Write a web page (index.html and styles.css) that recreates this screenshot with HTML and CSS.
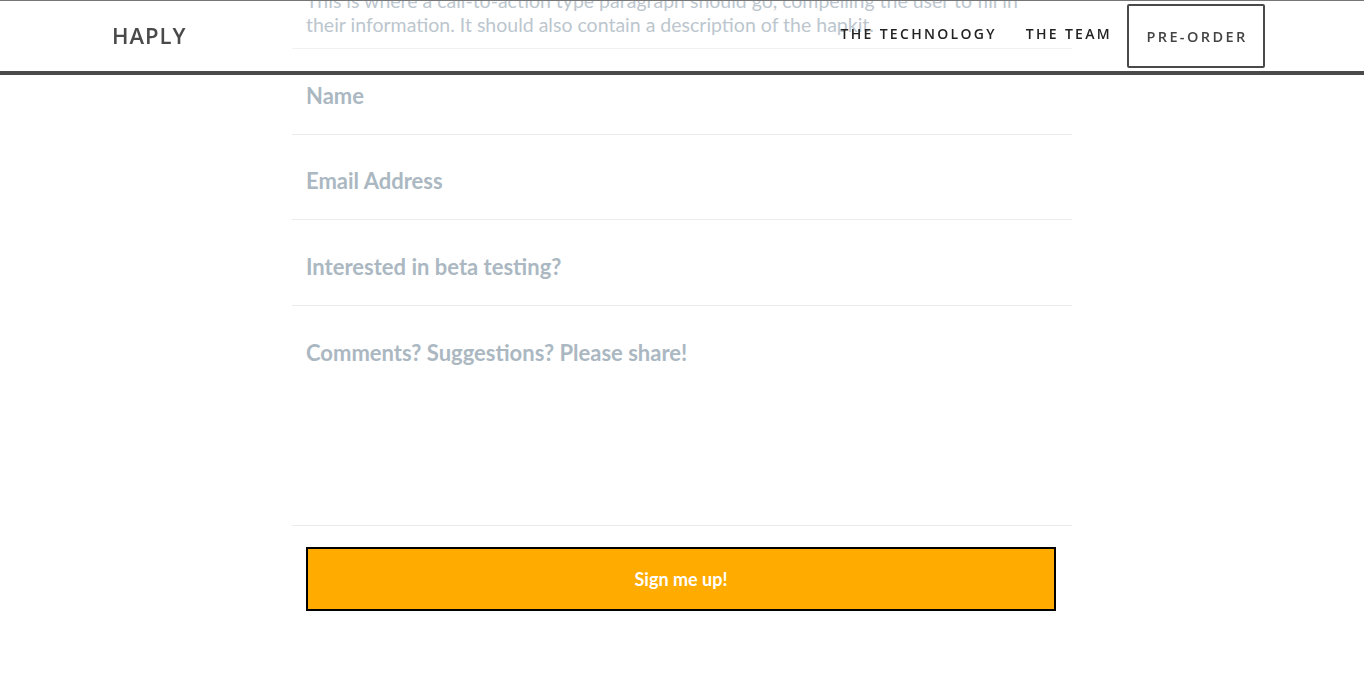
FILE: index.html
```html
<!DOCTYPE html>
<html lang="en">
<head>
<meta charset="utf-8">
<title>Haply - Pre-order</title>
<link rel="stylesheet" href="styles.css">
</head>
<body>
<header class="site-header">
  <a class="logo" href="#">HAPLY</a>
  <nav class="nav">
    <a class="nav-link" href="#">THE TECHNOLOGY</a>
    <a class="nav-link" href="#">THE TEAM</a>
    <a class="nav-button" href="#">PRE-ORDER</a>
  </nav>
</header>
<main class="signup">
  <p class="intro">This is where a call-to-action type paragraph should go, compelling the user to fill in their information. It should also contain a description of the hapkit.</p>
  <form class="form">
    <input class="field" type="text" placeholder="Name">
    <input class="field" type="email" placeholder="Email Address">
    <input class="field" type="text" placeholder="Interested in beta testing?">
    <textarea class="field field-area" placeholder="Comments? Suggestions? Please share!"></textarea>
    <button class="submit" type="button">Sign me up!</button>
  </form>
</main>
</body>
</html>
```
FILE: styles.css
```css
html, body {
  margin: 0;
  padding: 0;
  background: #ffffff;
  overflow: hidden;
}

body {
  font-family: Lato, "Open Sans", sans-serif;
}

.site-header {
  position: fixed;
  top: 0;
  left: 0;
  right: 0;
  height: 70px;
  border-top: 1px solid #767676;
  border-bottom: 4px solid #4a4a4a;
  display: flex;
  align-items: center;
  justify-content: space-between;
  padding: 0 99px 0 112px;
  z-index: 10;
}

.logo {
  font-family: "Open Sans", sans-serif;
  font-size: 22px;
  font-weight: 600;
  letter-spacing: 1px;
  color: #4a4a4a;
  text-decoration: none;
  margin-top: -3px;
}

.nav {
  display: flex;
  align-items: center;
}

.nav-link {
  font-family: "Open Sans", sans-serif;
  font-size: 14px;
  font-weight: 600;
  letter-spacing: 2.3px;
  color: #222222;
  text-decoration: none;
  margin-right: 29px;
  margin-bottom: 6px;
}

.nav-link + .nav-link {
  margin-right: 15px;
}

.nav-button {
  box-sizing: border-box;
  width: 138px;
  height: 64px;
  padding-left: 2px;
  border: 2px solid #4a4a4a;
  border-radius: 2px;
  display: flex;
  align-items: center;
  justify-content: center;
  font-family: "Open Sans", sans-serif;
  font-size: 14.5px;
  font-weight: 600;
  letter-spacing: 2.4px;
  color: #444444;
  text-decoration: none;
}

.signup {
  width: 780px;
  margin: -11px auto 0;
}

.intro {
  margin: 0;
  padding: 0 15px 11px 14px;
  font-size: 19.5px;
  line-height: 24px;
  color: #bcc6ce;
  border-bottom: 1px solid #f1f1f1;
}

.form {
  display: flex;
  flex-direction: column;
}

.field {
  display: block;
  box-sizing: border-box;
  width: 100%;
  height: 85.6px;
  margin: 0;
  padding: 8px 15px 0 14px;
  border: none;
  border-bottom: 1px solid #ececec;
  font-family: Lato, sans-serif;
  font-size: 22px;
  font-weight: 700;
  color: #555;
  background: transparent;
  outline: none;
}

.field::placeholder {
  color: #abb8c2;
  opacity: 1;
}

.field-area {
  height: 220px;
  padding: 34px 15px 0 14px;
  line-height: 26px;
  resize: none;
}

.submit {
  box-sizing: border-box;
  margin: 21px 16px 0 14px;
  height: 64px;
  border: 2px solid #000000;
  background: #ffab00;
  color: #ffffff;
  font-family: Lato, sans-serif;
  font-size: 18px;
  font-weight: 700;
}
```
